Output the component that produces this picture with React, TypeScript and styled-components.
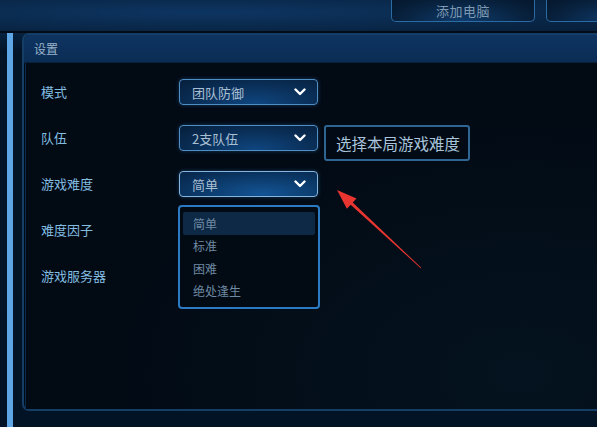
import styled, { createGlobalStyle } from 'styled-components';

const GlobalStyle = createGlobalStyle`
  html, body {
    margin: 0;
    padding: 0;
    background: #031427;
  }
  body {
    font-family: "Noto Sans CJK SC", "Noto Sans", sans-serif;
  }
`;

const Page = styled.div`
  position: relative;
  width: 597px;
  height: 427px;
  overflow: hidden;
  background: linear-gradient(180deg, #0a2747 0%, #06203d 8%, #031427 12%, #031326 100%);
`;

const TopBar = styled.div`
  height: 31px;
  display: flex;
  justify-content: flex-start;
  gap: 11px;
  padding-left: 391px;
  border-bottom: 2px solid #020b16;
  background: radial-gradient(ellipse at 35% 40%, #0d3562 0%, #0a2a4d 50%, #071f3b 100%);
`;

const TopButton = styled.div`
  flex: none;
  width: 144px;
  height: 24px;
  margin-top: -2px;
  display: flex;
  align-items: center;
  justify-content: center;
  padding-top: 2px;
  box-sizing: border-box;
  border: 1px solid #2c6aa3;
  border-top: none;
  border-radius: 0 0 5px 5px;
  background: radial-gradient(ellipse at 50% 100%, #0f3c6c 0%, #08223f 60%, #051629 100%);
  color: #7f9ab2;
  font-size: 13px;
  letter-spacing: 0.5px;
`;

const Main = styled.div`
  display: flex;
  padding-left: 7px;
`;

const SideBar = styled.div`
  flex: none;
  width: 6px;
  height: 400px;
  background: #5ea6e6;
  margin-right: 9px;
`;

const Panel = styled.div`
  flex: none;
  width: 620px;
  height: 374px;
  display: flex;
  flex-direction: column;
  border: 2px solid #143e66;
  border-right: none;
  border-radius: 7px 0 0 7px;
  background: #020a14;
`;

const PanelHeader = styled.div`
  height: 28px;
  box-sizing: border-box;
  display: flex;
  align-items: flex-start;
  padding: 5px 0 0 10px;
  background: linear-gradient(180deg, #0e3461 0%, #0b2d55 100%);
  border-radius: 5px 0 0 0;
  border-bottom: 1px solid #07203c;
  color: #9ab3c8;
  font-size: 12px;
`;

const PanelBody = styled.div`
  flex: 1;
  margin-left: 1px;
  border-left: 1px solid #0c2b4a;
  padding: 16px 0 0 15px;
  display: grid;
  grid-template-columns: 138px 139px;
  grid-auto-rows: 26px;
  row-gap: 20px;
  align-content: start;
  background: radial-gradient(ellipse at 80% 90%, #04131f 0%, #020a14 60%);
`;

const Label = styled.div`
  display: flex;
  align-items: center;
  margin-top: -2px;
  color: #82bde0;
  font-size: 13px;
`;

const Cell = styled.div`
  position: relative;
`;

const Select = styled.div<{ $active?: boolean }>`
  height: 26px;
  box-sizing: border-box;
  display: flex;
  align-items: center;
  justify-content: space-between;
  padding: 0 11px 0 12px;
  border: 1.5px solid ${(p) => (p.$active ? '#86b6e0' : '#4f8fc6')};
  border-radius: 4px;
  background: ${(p) =>
    p.$active
      ? 'radial-gradient(ellipse at 60% 90%, #135494 0%, #0b3968 55%, #072447 100%)'
      : 'radial-gradient(ellipse at 55% 100%, #0f4680 0%, #0a2f58 55%, #061f3b 100%)'};
  box-shadow: 0 0 4px rgba(60, 140, 220, 0.35);
  color: #a9bfd2;
  font-size: 13px;
`;

const Chevron = () => (
  <svg width="12" height="8" viewBox="0 0 12 8">
    <path d="M1.5 1.5 L6 6 L10.5 1.5" fill="none" stroke="#ffffff" strokeWidth="2.4" strokeLinecap="round" strokeLinejoin="round" />
  </svg>
);

const Tip = styled.div`
  position: absolute;
  left: calc(100% + 6px);
  top: 0;
  height: 36px;
  box-sizing: border-box;
  padding: 0 8px 0 10px;
  display: flex;
  align-items: center;
  white-space: nowrap;
  border: 2px solid #2f6593;
  border-radius: 3px;
  background: #020b15;
  color: #a9c4db;
  font-size: 15.5px;
`;

const Menu = styled.div`
  position: absolute;
  left: -1px;
  top: 34px;
  width: 142px;
  height: 104px;
  box-sizing: border-box;
  padding: 5px 3px;
  border: 2px solid #2d7ac4;
  border-radius: 4px;
  background: #020a14;
  z-index: 2;
`;

const MenuItem = styled.div<{ $selected?: boolean }>`
  height: 22.5px;
  display: flex;
  align-items: center;
  padding-left: 10px;
  border-radius: 2px;
  background: ${(p) => (p.$selected ? '#0e2945' : 'transparent')};
  color: #6f8aa3;
  font-size: 12px;
`;

const Arrow = styled.svg`
  position: absolute;
  left: 0;
  top: 0;
  pointer-events: none;
`;

const rows = [
  { label: '模式', value: '团队防御' },
  { label: '队伍', value: '2支队伍', tip: '选择本局游戏难度' },
  { label: '游戏难度', value: '简单', open: true },
  { label: '难度因子' },
  { label: '游戏服务器' },
];

const options = ['简单', '标准', '困难', '绝处逢生'];

export default function App() {
  return (
    <>
      <GlobalStyle />
      <Page>
        <TopBar>
          <TopButton>添加电脑</TopButton>
          <TopButton />
        </TopBar>
        <Main>
          <SideBar />
          <Panel>
            <PanelHeader>设置</PanelHeader>
            <PanelBody>
              {rows.map((row) => (
                <>
                  <Label key={row.label}>{row.label}</Label>
                  <Cell key={row.label + '-cell'}>
                    {row.value && (
                      <Select $active={row.open}>
                        <span>{row.value}</span>
                        <Chevron />
                      </Select>
                    )}
                    {row.tip && <Tip>{row.tip}</Tip>}
                    {row.open && (
                      <Menu>
                        {options.map((opt, i) => (
                          <MenuItem key={opt} $selected={i === 0}>
                            {opt}
                          </MenuItem>
                        ))}
                      </Menu>
                    )}
                  </Cell>
                </>
              ))}
            </PanelBody>
          </Panel>
        </Main>
        <Arrow width="597" height="427" viewBox="0 0 597 427">
          <polygon
            points="337,190 356.5,198.5 352.7,202.5 421.3,267.8 420.7,268.2 350.7,204.7 346.9,208.7"
            fill="#e8352f"
          />
        </Arrow>
      </Page>
    </>
  );
}
